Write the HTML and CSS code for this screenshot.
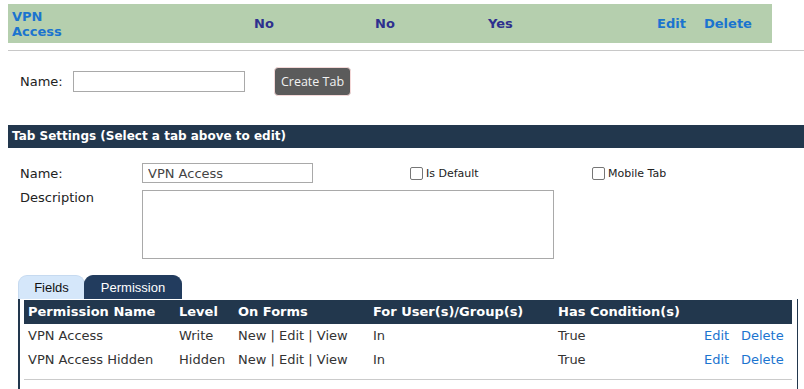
FILE: index.html
```html
<!DOCTYPE html>
<html lang="en">
<head>
    <meta charset="UTF-8">
    <meta name="viewport" content="width=device-width, initial-scale=1.0">
    <title>Tab Settings</title>
    <link rel="stylesheet" href="styles.css">
</head>
<body>
    <div class="summary">
        <a class="cell tab-name" href="#">VPN<br>Access</a>
        <span class="cell flag">No</span>
        <span class="cell flag">No</span>
        <span class="cell flag">Yes</span>
        <a class="cell action" href="#">Edit</a>
        <a class="cell action" href="#">Delete</a>
    </div>
    <div class="rule"></div>

    <form class="create-row">
        <label for="newTab">Name:</label>
        <input id="newTab" class="text-input" value="">
        <button type="button" class="create-btn">Create Tab</button>
    </form>

    <div class="section-bar">Tab Settings (Select a tab above to edit)</div>

    <div class="settings">
        <label for="tabName" class="field-label">Name:</label>
        <input id="tabName" class="text-input tab-name-input" value="VPN Access">
        <label class="check"><input type="checkbox"> Is Default</label>
        <label class="check"><input type="checkbox"> Mobile Tab</label>

        <label for="tabDesc" class="field-label desc-label">Description</label>
        <textarea id="tabDesc" class="desc"></textarea>
    </div>

    <div class="tabs">
        <div class="tab">Fields</div>
        <div class="tab active">Permission</div>
    </div>
    <div class="tab-panel">
        <div class="perm-grid head">
            <span>Permission Name</span>
            <span>Level</span>
            <span>On Forms</span>
            <span>For User(s)/Group(s)</span>
            <span>Has Condition(s)</span>
            <span></span>
            <span></span>
        </div>
        <div class="perm-grid">
            <span>VPN Access</span>
            <span>Write</span>
            <span>New | Edit | View</span>
            <span>In</span>
            <span>True</span>
            <a href="#">Edit</a>
            <a href="#">Delete</a>
        </div>
        <div class="perm-grid">
            <span>VPN Access Hidden</span>
            <span>Hidden</span>
            <span>New | Edit | View</span>
            <span>In</span>
            <span>True</span>
            <a href="#">Edit</a>
            <a href="#">Delete</a>
        </div>
        <div class="panel-rule"></div>
    </div>
</body>
</html>
```

FILE: styles.css
```css
body {
    margin: 0;
    padding: 4px 0 0 8px;
    font-family: "DejaVu Sans", Verdana, sans-serif;
    font-size: 13px;
    color: #222;
}

a {
    text-decoration: none;
    color: #1b74cf;
}

.summary {
    display: grid;
    grid-template-columns: 242px 121px 113px 169px 47px 1fr;
    align-items: center;
    width: 764px;
    height: 39px;
    background-color: #b5cfae;
    font-weight: bold;
}

.summary .cell {
    padding-left: 4px;
}

.tab-name {
    line-height: 15px;
}

.flag {
    color: #2e2f8e;
}

.rule {
    margin-top: 7px;
    height: 1px;
    background: #c8c8c8;
}

.create-row {
    display: flex;
    align-items: center;
    margin-top: 16px;
    padding-left: 12px;
}

.create-row label {
    width: 53px;
}

.text-input {
    box-sizing: border-box;
    height: 21px;
    width: 172px;
    padding: 0 5px;
    border: 1px solid #a9a9a9;
    font-family: "DejaVu Sans", Verdana, sans-serif;
    font-size: 13px;
    color: #444;
}

.create-btn {
    box-sizing: border-box;
    margin-left: 29px;
    width: 77px;
    height: 29px;
    padding: 0;
    background: #5b5b5b;
    border: 1px solid #f4d8d8;
    border-radius: 4px;
    color: #f2f2f2;
    font-family: "Open Sans", sans-serif;
    font-size: 12.5px;
}

.section-bar {
    margin-top: 29px;
    height: 23px;
    line-height: 23px;
    padding-left: 4px;
    background: #22374d;
    color: #fff;
    font-size: 12px;
    font-weight: bold;
}

.settings {
    display: grid;
    grid-template-columns: 122px 268px 182px auto;
    row-gap: 7px;
    margin-top: 15px;
    padding-left: 12px;
    align-items: center;
}

.tab-name-input {
    width: 171px;
    height: 20px;
}

.check {
    display: flex;
    align-items: center;
    font-size: 11px;
    color: #222;
}

.check input {
    appearance: none;
    box-sizing: border-box;
    width: 13px;
    height: 13px;
    margin: 0 3px 0 0;
    border: 1px solid #767676;
    border-radius: 2px;
    background: #fff;
}

.desc-label {
    align-self: start;
    line-height: 16px;
}

.desc {
    grid-column: 2 / 4;
    box-sizing: border-box;
    width: 412px;
    height: 69px;
    border: 1px solid #a9a9a9;
    resize: none;
}

.tabs {
    display: flex;
    margin-top: 16px;
    padding-left: 10px;
}

.tab {
    box-sizing: border-box;
    height: 24px;
    line-height: 23px;
    width: 67px;
    text-align: center;
    background: #d5e7fa;
    border: 1px solid #c6daf0;
    border-bottom: none;
    border-radius: 9px 9px 0 0;
    font-family: "Liberation Sans", Arial, sans-serif;
    font-size: 13px;
    color: #111;
}

.tab.active {
    width: 98px;
    margin-left: -1px;
    background: #223c5e;
    border-color: #223c5e;
    color: #fff;
}

.tab-panel {
    box-sizing: border-box;
    margin-left: 10px;
    width: 780px;
    min-height: 100px;
    padding: 1px 5px 0 4px;
    border-left: 2px solid #22374d;
    border-right: 1px solid #22374d;
}

.perm-grid {
    display: grid;
    grid-template-columns: 151px 59px 135px 185px 146px 37px 1fr;
    height: 24px;
    line-height: 24px;
    color: #333;
}

.perm-grid > * {
    padding-left: 4px;
    white-space: nowrap;
}

.perm-grid.head {
    background: #22374d;
    color: #fff;
    font-weight: bold;
}

.panel-rule {
    margin-top: 7px;
    height: 1px;
    background: #cbcbcb;
}
```
